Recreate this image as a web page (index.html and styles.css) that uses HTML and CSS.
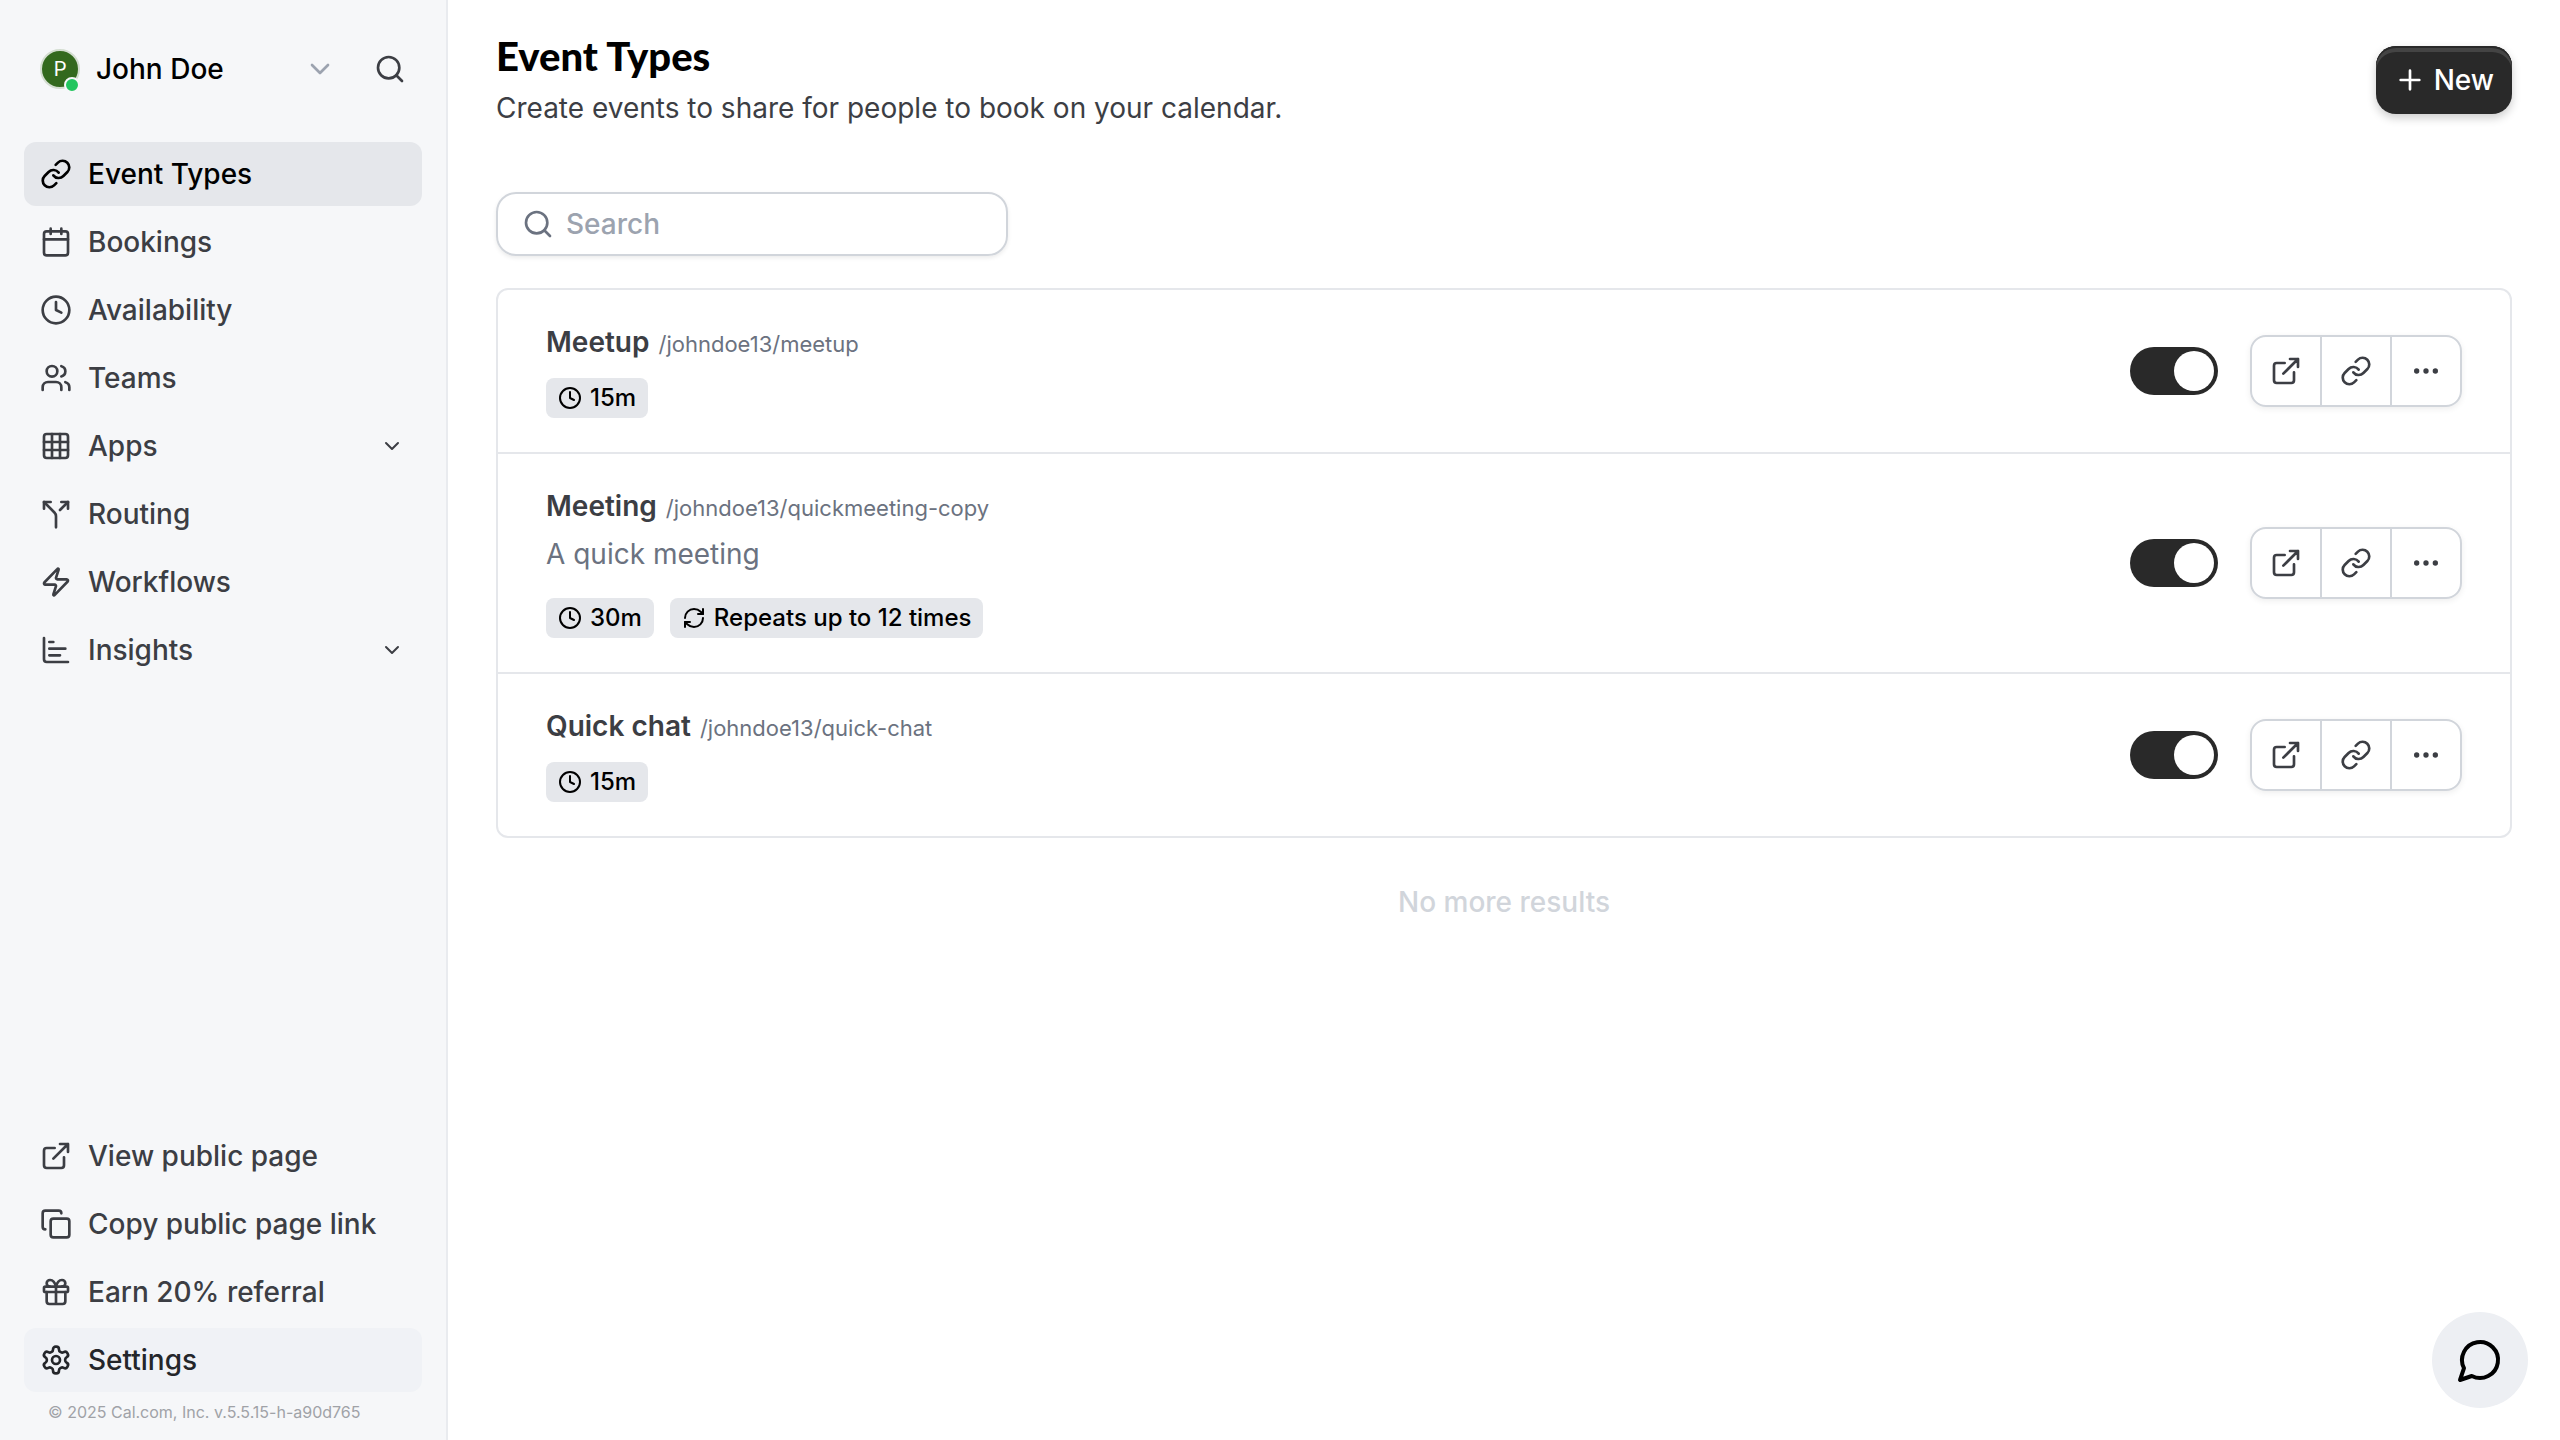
FILE: index.html
```html
<!DOCTYPE html>
<html lang="en">
<head>
<meta charset="utf-8">
<meta name="viewport" content="width=device-width, initial-scale=1">
<title>Event Types | Cal.com</title>
<link rel="stylesheet" href="styles.css">
</head>
<body>
<svg class="sprite" aria-hidden="true">
  <symbol id="link" viewBox="0 0 24 24"><path d="M10 13a5 5 0 0 0 7.54.54l3-3a5 5 0 0 0-7.07-7.07l-1.72 1.71"/><path d="M14 11a5 5 0 0 0-7.54-.54l-3 3a5 5 0 0 0 7.07 7.07l1.71-1.71"/></symbol>
  <symbol id="calendar" viewBox="0 0 24 24"><path d="M8 2v4M16 2v4M3 10h18"/><rect x="3" y="4" width="18" height="18" rx="2"/></symbol>
  <symbol id="clock" viewBox="0 0 24 24"><circle cx="12" cy="12" r="10"/><path d="M12 6v6l4 2"/></symbol>
  <symbol id="users" viewBox="0 0 24 24"><path d="M16 21v-2a4 4 0 0 0-4-4H6a4 4 0 0 0-4 4v2"/><circle cx="9" cy="7" r="4"/><path d="M22 21v-2a4 4 0 0 0-3-3.87M16 3.13a4 4 0 0 1 0 7.75"/></symbol>
  <symbol id="grid" viewBox="0 0 24 24"><rect x="3" y="3" width="18" height="18" rx="2"/><path d="M3 9h18M3 15h18M9 3v18M15 3v18"/></symbol>
  <symbol id="split" viewBox="0 0 24 24"><path d="M16 3h5v5M8 3H3v5"/><path d="M12 22v-8.3a4 4 0 0 0-1.172-2.872L3 3"/><path d="m15 9 6-6"/></symbol>
  <symbol id="zap" viewBox="0 0 24 24"><path d="M4 14a1 1 0 0 1-.78-1.63l9.9-10.2a.5.5 0 0 1 .86.46l-1.92 6.02A1 1 0 0 0 13 10h7a1 1 0 0 1 .78 1.63l-9.9 10.2a.5.5 0 0 1-.86-.46l1.92-6.02A1 1 0 0 0 11 14z"/></symbol>
  <symbol id="chart" viewBox="0 0 24 24"><path d="M3 3v16a2 2 0 0 0 2 2h16M7 16h8M7 11h12M7 6h3"/></symbol>
  <symbol id="external" viewBox="0 0 24 24"><path d="M15 3h6v6M10 14 21 3M18 13v6a2 2 0 0 1-2 2H5a2 2 0 0 1-2-2V8a2 2 0 0 1 2-2h6"/></symbol>
  <symbol id="copy" viewBox="0 0 24 24"><rect x="8" y="8" width="14" height="14" rx="2"/><path d="M4 16c-1.1 0-2-.9-2-2V4c0-1.1.9-2 2-2h10c1.1 0 2 .9 2 2"/></symbol>
  <symbol id="gift" viewBox="0 0 24 24"><rect x="3" y="8" width="18" height="4" rx="1"/><path d="M12 8v13M19 12v7a2 2 0 0 1-2 2H7a2 2 0 0 1-2-2v-7"/><path d="M7.5 8a2.5 2.5 0 0 1 0-5A4.8 8 0 0 1 12 8a4.8 8 0 0 1 4.5-5 2.5 2.5 0 0 1 0 5"/></symbol>
  <symbol id="settings" viewBox="0 0 24 24"><path d="M12.22 2h-.44a2 2 0 0 0-2 2v.18a2 2 0 0 1-1 1.73l-.43.25a2 2 0 0 1-2 0l-.15-.08a2 2 0 0 0-2.73.73l-.22.38a2 2 0 0 0 .73 2.73l.15.1a2 2 0 0 1 1 1.72v.51a2 2 0 0 1-1 1.74l-.15.09a2 2 0 0 0-.73 2.73l.22.38a2 2 0 0 0 2.73.73l.15-.08a2 2 0 0 1 2 0l.43.25a2 2 0 0 1 1 1.73V20a2 2 0 0 0 2 2h.44a2 2 0 0 0 2-2v-.18a2 2 0 0 1 1-1.73l.43-.25a2 2 0 0 1 2 0l.15.08a2 2 0 0 0 2.73-.73l.22-.39a2 2 0 0 0-.73-2.73l-.15-.08a2 2 0 0 1-1-1.74v-.5a2 2 0 0 1 1-1.74l.15-.09a2 2 0 0 0 .73-2.73l-.22-.38a2 2 0 0 0-2.73-.73l-.15.08a2 2 0 0 1-2 0l-.43-.25a2 2 0 0 1-1-1.73V4a2 2 0 0 0-2-2z"/><circle cx="12" cy="12" r="3"/></symbol>
  <symbol id="search" viewBox="0 0 24 24"><circle cx="11" cy="11" r="8"/><path d="m21 21-4.3-4.3"/></symbol>
  <symbol id="chevron" viewBox="0 0 24 24"><path d="m6 9 6 6 6-6"/></symbol>
  <symbol id="plus" viewBox="0 0 24 24"><path d="M5 12h14M12 5v14"/></symbol>
  <symbol id="dots" viewBox="0 0 24 24"><circle cx="12" cy="12" r="1"/><circle cx="19" cy="12" r="1"/><circle cx="5" cy="12" r="1"/></symbol>
  <symbol id="refresh" viewBox="0 0 24 24"><path d="M3 12a9 9 0 0 1 9-9 9.75 9.75 0 0 1 6.74 2.74L21 8"/><path d="M21 3v5h-5M21 12a9 9 0 0 1-9 9 9.75 9.75 0 0 1-6.74-2.74L3 16"/><path d="M8 16H3v5"/></symbol>
  <symbol id="message" viewBox="0 0 24 24"><path d="M7.9 20A9 9 0 1 0 4 16.1L2 22Z"/></symbol>
</svg>
<div class="app">
  <aside class="sidebar">
    <div class="account">
      <button class="profile" type="button">
        <span class="avatar">P<span class="status"></span></span>
        <span class="profile-name">John Doe</span>
        <svg class="icon profile-chevron"><use href="#chevron"/></svg>
      </button>
      <button class="icon-button" type="button" aria-label="Search"><svg class="icon"><use href="#search"/></svg></button>
    </div>
    <nav class="nav" aria-label="Main">
      <a class="nav-item active" href="#" aria-current="page"><svg class="icon"><use href="#link"/></svg><span>Event Types</span></a>
      <a class="nav-item" href="#"><svg class="icon"><use href="#calendar"/></svg><span>Bookings</span></a>
      <a class="nav-item" href="#"><svg class="icon"><use href="#clock"/></svg><span>Availability</span></a>
      <a class="nav-item" href="#"><svg class="icon"><use href="#users"/></svg><span>Teams</span></a>
      <a class="nav-item" href="#"><svg class="icon"><use href="#grid"/></svg><span>Apps</span><svg class="icon small nav-chevron"><use href="#chevron"/></svg></a>
      <a class="nav-item" href="#"><svg class="icon"><use href="#split"/></svg><span>Routing</span></a>
      <a class="nav-item" href="#"><svg class="icon"><use href="#zap"/></svg><span>Workflows</span></a>
      <a class="nav-item" href="#"><svg class="icon"><use href="#chart"/></svg><span>Insights</span><svg class="icon small nav-chevron"><use href="#chevron"/></svg></a>
    </nav>
    <nav class="nav nav-bottom" aria-label="Account">
      <a class="nav-item" href="#"><svg class="icon"><use href="#external"/></svg><span>View public page</span></a>
      <button class="nav-item" type="button"><svg class="icon"><use href="#copy"/></svg><span>Copy public page link</span></button>
      <a class="nav-item" href="#"><svg class="icon"><use href="#gift"/></svg><span>Earn 20% referral</span></a>
      <a class="nav-item hovered" href="#"><svg class="icon"><use href="#settings"/></svg><span>Settings</span></a>
    </nav>
    <small class="version">© 2025 Cal.com, Inc. v.5.5.15-h-a90d765</small>
  </aside>
  <main class="main">
    <header class="page-header">
      <div>
        <h1 class="page-title">Event Types</h1>
        <p class="page-subtitle">Create events to share for people to book on your calendar.</p>
      </div>
      <button class="new-button" type="button"><svg class="icon"><use href="#plus"/></svg>New</button>
    </header>
    <label class="search">
      <svg class="icon"><use href="#search"/></svg>
      <input class="search-input" type="search" placeholder="Search" aria-label="Search">
    </label>
    <ul class="events">
      <li class="event">
        <div>
          <h2 class="event-title">Meetup <small class="slug">/johndoe13/meetup</small></h2>
          <div class="badges"><span class="badge"><svg class="icon small"><use href="#clock"/></svg>15m</span></div>
        </div>
        <div class="controls">
          <input class="toggle" type="checkbox" role="switch" checked aria-label="Show Meetup on profile">
          <div class="actions">
            <a class="action" href="#" aria-label="Preview"><svg class="icon"><use href="#external"/></svg></a>
            <button class="action" type="button" aria-label="Copy link"><svg class="icon"><use href="#link"/></svg></button>
            <button class="action" type="button" aria-label="More options"><svg class="icon"><use href="#dots"/></svg></button>
          </div>
        </div>
      </li>
      <li class="event">
        <div>
          <h2 class="event-title">Meeting <small class="slug">/johndoe13/quickmeeting-copy</small></h2>
          <p class="description">A quick meeting</p>
          <div class="badges">
            <span class="badge"><svg class="icon small"><use href="#clock"/></svg>30m</span>
            <span class="badge"><svg class="icon small"><use href="#refresh"/></svg>Repeats up to 12 times</span>
          </div>
        </div>
        <div class="controls">
          <input class="toggle" type="checkbox" role="switch" checked aria-label="Show Meeting on profile">
          <div class="actions">
            <a class="action" href="#" aria-label="Preview"><svg class="icon"><use href="#external"/></svg></a>
            <button class="action" type="button" aria-label="Copy link"><svg class="icon"><use href="#link"/></svg></button>
            <button class="action" type="button" aria-label="More options"><svg class="icon"><use href="#dots"/></svg></button>
          </div>
        </div>
      </li>
      <li class="event">
        <div>
          <h2 class="event-title">Quick chat <small class="slug">/johndoe13/quick-chat</small></h2>
          <div class="badges"><span class="badge"><svg class="icon small"><use href="#clock"/></svg>15m</span></div>
        </div>
        <div class="controls">
          <input class="toggle" type="checkbox" role="switch" checked aria-label="Show Quick chat on profile">
          <div class="actions">
            <a class="action" href="#" aria-label="Preview"><svg class="icon"><use href="#external"/></svg></a>
            <button class="action" type="button" aria-label="Copy link"><svg class="icon"><use href="#link"/></svg></button>
            <button class="action" type="button" aria-label="More options"><svg class="icon"><use href="#dots"/></svg></button>
          </div>
        </div>
      </li>
    </ul>
    <p class="end-note">No more results</p>
  </main>
</div>
<button class="chat" type="button" aria-label="Open chat"><svg class="icon large"><use href="#message"/></svg></button>
</body>
</html>
```
FILE: styles.css
```css
*, *::before, *::after { box-sizing: border-box; }

body {
  margin: 0;
  font-family: Inter, "Liberation Sans", sans-serif;
  font-size: 28px;
  line-height: 36px;
  color: #3c3e44;
  background: #fff;
}

h1, h2, p, ul { margin: 0; padding: 0; }
a { color: inherit; text-decoration: none; }
button {
  margin: 0;
  padding: 0;
  border: 0;
  background: none;
  font: inherit;
  color: inherit;
  cursor: pointer;
}

.sprite { display: none; }

.icon {
  flex: none;
  width: 32px;
  height: 32px;
  fill: none;
  stroke: currentColor;
  stroke-width: 2;
  stroke-linecap: round;
  stroke-linejoin: round;
}
.icon.small { width: 24px; height: 24px; }
.icon.large { width: 48px; height: 48px; }

.app { display: flex; min-height: 100vh; }

/* Sidebar */
.sidebar {
  display: flex;
  flex: none;
  flex-direction: column;
  width: 448px;
  padding: 44px 24px 16px;
  border-right: 2px solid #e9ebef;
  background: #f6f7f9;
}

.account {
  display: flex;
  align-items: center;
  justify-content: space-between;
  height: 50px;
  padding: 0 16px;
  margin-bottom: 48px;
}
.profile {
  display: flex;
  align-items: center;
  width: 296px;
  font-weight: 500;
  color: #000;
}
.avatar {
  position: relative;
  display: grid;
  place-items: center;
  width: 40px;
  height: 40px;
  margin-right: 16px;
  border: 2px solid #d3ddd0;
  border-radius: 50%;
  background: #33691e;
  font-family: Roboto, sans-serif;
  font-size: 20px;
  font-weight: 400;
  color: #fff;
}
.status {
  position: absolute;
  right: -2px;
  bottom: -6px;
  width: 16px;
  height: 16px;
  border: 2px solid #f6f7f9;
  border-radius: 50%;
  background: #22c55e;
}
.profile-chevron { margin-left: auto; color: #9ca3af; }
.icon-button { display: flex; }

.nav { display: flex; flex-direction: column; gap: 4px; }
.nav-bottom { margin-top: auto; }
.nav-item {
  display: flex;
  align-items: center;
  gap: 16px;
  height: 64px;
  padding: 0 16px;
  border-radius: 12px;
  font-weight: 500;
  text-align: left;
}
.nav-item.active { background: #e5e7eb; color: #000; }
.nav-item.hovered { background: #f0f2f6; color: #24262a; }
.nav-chevron { margin: 0 2px 0 auto; }

.version {
  padding: 8px 24px 0;
  font-size: 16px;
  line-height: 24px;
  color: #a0a2a7;
}

/* Page */
.main { flex: 1; min-width: 0; padding: 32px 48px; }

.page-header {
  display: flex;
  align-items: center;
  justify-content: space-between;
  margin-bottom: 64px;
}
.page-title {
  font-family: Lato, Inter, sans-serif;
  font-size: 40px;
  font-weight: 900;
  line-height: 48px;
  color: #000;
}
.page-subtitle { padding-top: 8px; line-height: 40px; }

.new-button {
  display: flex;
  align-items: center;
  gap: 8px;
  height: 68px;
  padding: 0 18px;
  border-radius: 20px;
  background: #292929;
  box-shadow: inset 0 2px #292929, inset 0 6px #444, 0 4px 10px rgba(0, 0, 0, 0.2);
  font-weight: 500;
  color: #fff;
}

.search {
  display: flex;
  align-items: center;
  gap: 12px;
  max-width: 512px;
  height: 64px;
  margin-bottom: 32px;
  padding: 0 24px;
  border: 2px solid #d1d5db;
  border-radius: 20px;
  box-shadow: 0 2px 4px rgba(0, 0, 0, 0.08);
  color: #6b7280;
}
.search-input {
  flex: 1;
  min-width: 0;
  padding: 0;
  border: 0;
  outline: 0;
  background: none;
  font: inherit;
  font-weight: 500;
  color: #3c3e44;
}
.search-input::placeholder { color: #9ca3af; opacity: 1; }

.events {
  border: 2px solid #e5e7eb;
  border-radius: 12px;
  list-style: none;
}
.event {
  display: flex;
  align-items: center;
  justify-content: space-between;
  padding: 34px 48px;
}
.event + .event { border-top: 2px solid #e5e7eb; }
.event-title { font-size: 28px; font-weight: 600; line-height: 36px; }
.slug {
  margin-left: 2px;
  font-size: 22px;
  font-weight: 400;
  line-height: 24px;
  color: #6b7280;
}
.description { margin: 12px 0 26px; color: #6b7280; }

.badges { display: flex; gap: 16px; margin-top: 18px; }
.badge {
  display: flex;
  align-items: center;
  gap: 8px;
  height: 40px;
  padding: 0 12px;
  border-radius: 8px;
  background: #e5e7eb;
  font-size: 24px;
  font-weight: 500;
  color: #000;
}

.controls { display: flex; align-items: center; gap: 32px; }
.toggle {
  display: flex;
  justify-content: flex-start;
  width: 88px;
  height: 48px;
  margin: 0;
  padding: 4px;
  border-radius: 24px;
  appearance: none;
  background: #e5e7eb;
  cursor: pointer;
}
.toggle:checked { justify-content: flex-end; background: #292929; }
.toggle::before {
  content: "";
  width: 40px;
  height: 40px;
  border-radius: 50%;
  background: #fff;
}

.actions {
  display: flex;
  border: 2px solid #d1d5db;
  border-radius: 16px;
  box-shadow: 0 2px 6px rgba(0, 0, 0, 0.07);
}
.action {
  display: grid;
  place-items: center;
  width: 68px;
  height: 68px;
}
.action + .action {
  width: 70px;
  border-left: 2px solid #d1d5db;
}

.end-note {
  padding: 44px 0;
  text-align: center;
  font-weight: 500;
  line-height: 40px;
  color: #d1d5db;
}

.chat {
  position: fixed;
  right: 32px;
  bottom: 32px;
  display: grid;
  place-items: center;
  width: 96px;
  height: 96px;
  border-radius: 50%;
  background: #edeff3;
  color: #000;
}
```
